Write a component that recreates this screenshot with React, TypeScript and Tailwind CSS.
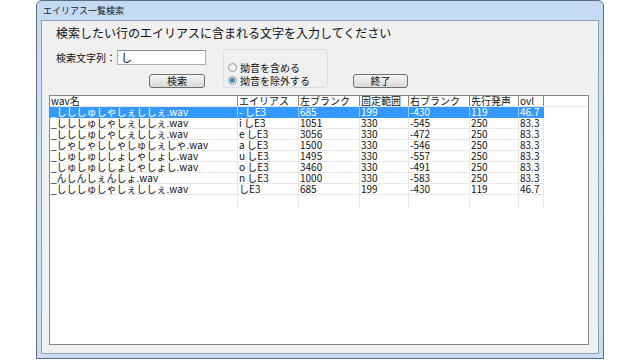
import React from 'react';

type Row = { wav: string; alias: string; left: string; fixed: string; right: string; pre: string; ovl: string };

const rows: Row[] = [
  { wav: '_しししゅしゃしぇししぇ.wav', alias: '- しE3', left: '685', fixed: '199', right: '-430', pre: '119', ovl: '46.7' },
  { wav: '_しししゅしゃしぇししぇ.wav', alias: 'i しE3', left: '1051', fixed: '330', right: '-545', pre: '250', ovl: '83.3' },
  { wav: '_しししゅしゃしぇししぇ.wav', alias: 'e しE3', left: '3056', fixed: '330', right: '-472', pre: '250', ovl: '83.3' },
  { wav: '_しゃしゃししゃしゅしぇしゃ.wav', alias: 'a しE3', left: '1500', fixed: '330', right: '-546', pre: '250', ovl: '83.3' },
  { wav: '_しゅしゅししょしゃしょし.wav', alias: 'u しE3', left: '1495', fixed: '330', right: '-557', pre: '250', ovl: '83.3' },
  { wav: '_しゅしゅししょしゃしょし.wav', alias: 'o しE3', left: '3460', fixed: '330', right: '-491', pre: '250', ovl: '83.3' },
  { wav: '_んしんしぇんしょ.wav', alias: 'n しE3', left: '1000', fixed: '330', right: '-583', pre: '250', ovl: '83.3' },
  { wav: '_しししゅしゃしぇししぇ.wav', alias: 'しE3', left: '685', fixed: '199', right: '-430', pre: '119', ovl: '46.7' },
];

const cols = ['w-[188px]', 'w-[61px]', 'w-[61px]', 'w-[49px]', 'w-[61px]', 'w-[49px]', 'w-[25px]'];
const heads = ['wav名', 'エイリアス', '左ブランク', '固定範囲', '右ブランク', '先行発声', 'ovl'];

const font = { fontFamily: '"Noto Sans CJK JP", "Liberation Sans", sans-serif' };

function Button({ label, className }: { label: string; className: string }) {
  return (
    <div
      className={`flex items-center justify-center rounded-[3px] border border-[#707070] bg-gradient-to-b from-[#f6f6f6] via-[#e8e8e8] to-[#d8d8d8] text-[10px] leading-none text-[#111] ${className}`}
    >
      {label}
    </div>
  );
}

function Radio({ checked, label }: { checked: boolean; label: string }) {
  return (
    <div className="flex h-[13px] items-center">
      <div className="ml-[4px] flex h-[9px] w-[9px] items-center justify-center rounded-full border border-[#9a9a9a] bg-gradient-to-br from-[#e6e6e6] to-[#fdfdfd]">
        {checked && <div className="h-[5px] w-[5px] rounded-full bg-gradient-to-br from-[#1e5fa8] to-[#5fa2e0]" />}
      </div>
      <span className="ml-[3px] whitespace-nowrap text-[10px] leading-none text-[#111]">{label}</span>
    </div>
  );
}

export default function App() {
  return (
    <div className="h-[360px] w-[640px] overflow-hidden bg-white pl-[36px]" style={font}>
      <div className="flex h-[359px] w-[568px] flex-col rounded-t-[6px] border border-[#5f6d7c] bg-gradient-to-b from-[#c4daf2] via-[#d3e3f5] to-[#c9dcf1] px-[4px] pb-[4px]">
        <div className="flex h-[19px] items-center pl-[2px] text-[9px] leading-none text-[#1a1a1a]">エイリアス一覧検索</div>
        <div className="flex flex-1 flex-col border border-[#8da2b9] bg-[#f0f0f0]">
          <div className="whitespace-nowrap pl-[14px] pt-[5px] text-[12px] leading-[14px] text-[#111]">
            検索したい行のエイリアスに含まれる文字を入力してください
          </div>
          <div className="mt-[8px] flex items-end pl-[14px]">
            <div className="flex flex-col">
              <div className="mt-[2px] flex items-center">
                <span className="w-[61px] whitespace-nowrap text-[10px] leading-none text-[#111]">検索文字列：</span>
                <div className="flex h-[15px] w-[89px] items-center border border-[#abadb3] border-t-[#8e8f8f] bg-white pl-[3px] text-[11px] leading-none">
                  し
                </div>
              </div>
              <Button label="検索" className="ml-[93px] mt-[9px] h-[14px] w-[56px]" />
            </div>
            <div className="ml-[17px] h-[39px] w-[105px] rounded-[3px] border border-[#d5dfe5] pt-[11px]">
              <Radio checked={false} label="拗音を含める" />
              <Radio checked={true} label="拗音を除外する" />
            </div>
            <Button label="終了" className="ml-[25px] h-[14px] w-[55px]" />
          </div>
          <div className="mb-[8px] ml-[7px] mr-[9px] mt-[7px] flex-1 border border-[#828790] bg-white">
            <div className="flex h-[11px] border-b border-[#e5e5e5] text-[10px] leading-[10px] text-[#111]">
              {heads.map((h, i) => (
                <div key={h} className={`${cols[i]} overflow-x-clip whitespace-nowrap border-r border-[#8a8a8a] pl-[1px]`}>
                  {h}
                </div>
              ))}
            </div>
            {rows.map((r, ri) => {
              const vals = [r.wav, r.alias, r.left, r.fixed, r.right, r.pre, r.ovl];
              const sel = ri === 0;
              return (
                <div key={ri} className="flex h-[11px] text-[10px] leading-[10px]">
                  {vals.map((v, i) => (
                    <div
                      key={i}
                      className={`${cols[i]} overflow-x-clip whitespace-nowrap border-b border-r pl-[1px] ${
                        sel ? 'border-[#3399ff] bg-[#3399ff] text-white' : 'border-[#e8e8e8] text-[#111]'
                      } ${sel && i < 6 ? 'border-r-[#9ccaff]' : ''}`}
                    >
                      {v}
                    </div>
                  ))}
                </div>
              );
            })}
            <div className="flex h-[13px]">
              {cols.map((c, i) => (
                <div key={i} className={`${c} border-r border-[#e8e8e8]`} />
              ))}
            </div>
          </div>
        </div>
      </div>
    </div>
  );
}
